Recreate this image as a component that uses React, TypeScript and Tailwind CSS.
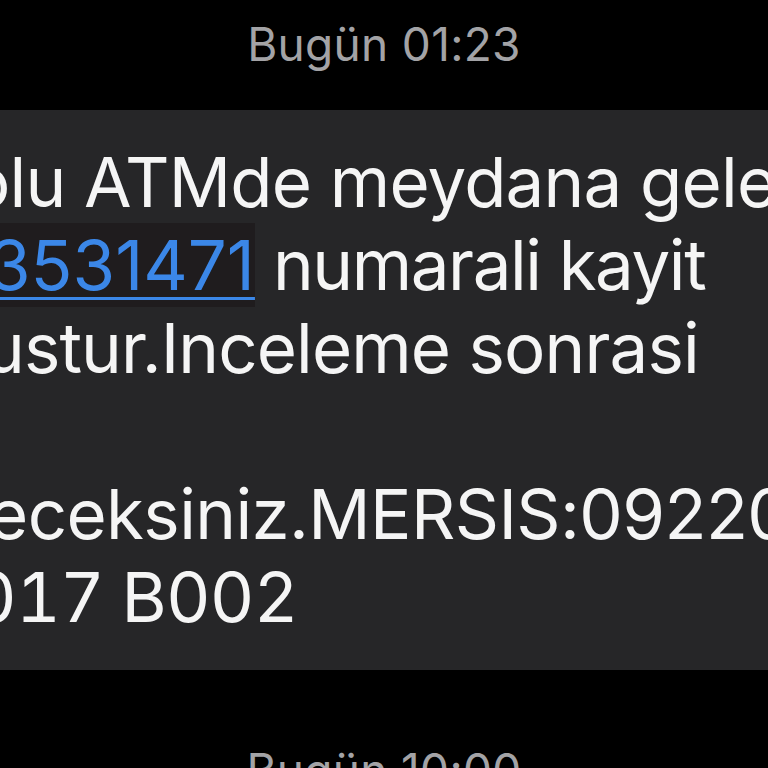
export default function App() {
    return (
        <div className="w-[768px] h-[768px] bg-black overflow-hidden flex flex-col" style={{ fontFamily: 'Inter, "Noto Sans", sans-serif' }}>
            {/* Timestamp */}
            <div className="h-[110px] shrink-0 flex justify-center pt-[21px]">
                <span className="text-[46px] leading-[46px] text-[#a3a3a6] tracking-[0.3px]">Bugün 01:23</span>
            </div>

            {/* Message bubble */}
            <div className="h-[560px] shrink-0 bg-[#262628] pt-[31px] text-[69px] leading-[83px] text-[#f5f5f5] whitespace-nowrap">
                <div className="ml-[-31px] tracking-[-0.8px]">olu ATMde meydana gelen</div>
                <div className="ml-[-12px]">
                    <span className="bg-[#1f1c1e] text-[#3b87e8] underline decoration-[3px] underline-offset-[7px]">3531471</span>
                    <span className="tracking-[-1.4px]"> numarali kayit</span>
                </div>
                <div className="ml-[-16px] tracking-[-0.9px]">ustur.Inceleme sonrasi</div>
                <div className="h-[83px]" />
                <div className="ml-[-12px] tracking-[-0.6px]">eceksiniz.MERSIS:09220</div>
                <div className="ml-[-28px] tabular-nums tracking-[-0.8px]">017 B002</div>
            </div>

            {/* Next timestamp */}
            <div className="shrink-0 flex justify-center pt-[77px]">
                <span className="text-[46px] leading-[46px] text-[#a3a3a6] tracking-[0.3px]">Bugün 10:00</span>
            </div>
        </div>
    )
}
